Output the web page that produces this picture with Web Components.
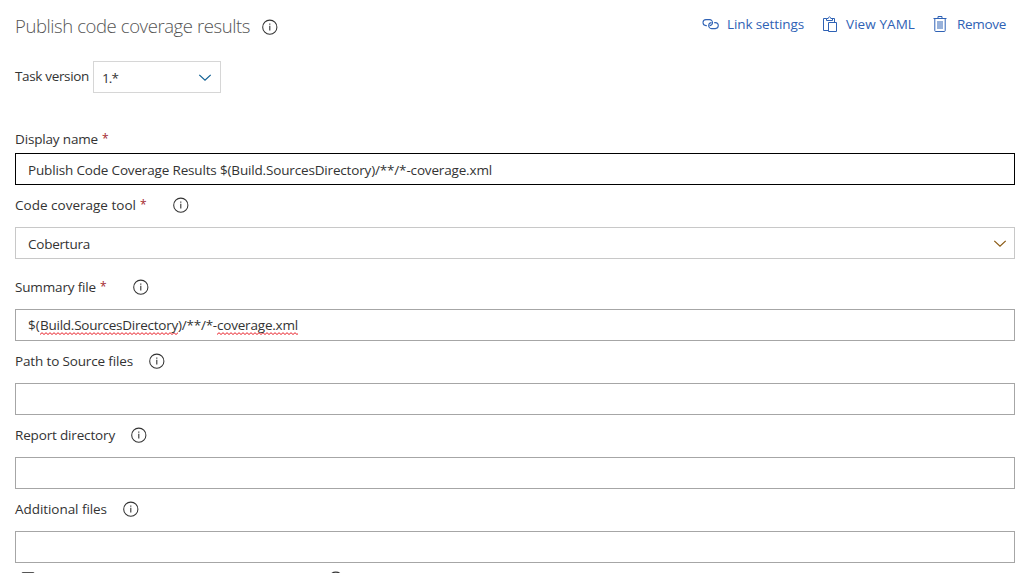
<!DOCTYPE html>
<html lang="en">
<head>
<meta charset="utf-8">
<title>Publish code coverage results</title>
<style>
html,body{margin:0;height:573px;overflow:hidden;background:#fff}
body{font:13.5px/20px "Open Sans","Noto Sans",sans-serif;color:#333}
</style>
</head>
<body>
<task-editor></task-editor>
<script>
const define = (name, html, setup) => {
  const t = document.createElement('template');
  t.innerHTML = html;
  customElements.define(name, class extends HTMLElement {
    connectedCallback() {
      if (this.shadowRoot) return;
      this.attachShadow({mode: 'open'}).append(t.content.cloneNode(true));
      if (setup) setup(this, this.shadowRoot);
    }
  });
};

// Text run tracked to a given width in pixels
define('fit-text', `<style>:host{display:inline-block;white-space:pre;flex:none}span{display:inline-block}</style><span><slot></slot></span>`, (el, root) => {
  const w = +el.getAttribute('w'), s = root.querySelector('span');
  const n = el.textContent.length;
  s.style.letterSpacing = (w - s.getBoundingClientRect().width) / n + 'px';
  el.style.width = w + 'px';
});

define('info-icon', `<style>:host{display:block;width:16px;height:16px;flex:none}svg{display:block}</style>
<svg width="16" height="16" viewBox="0 0 16 16"><circle cx="7.8" cy="8.2" r="7.1" fill="none" stroke="#333" stroke-width="1.05"/><path d="M7.8 6.7V11.4M7.8 4.5v1.2" stroke="#333" stroke-width="1.1"/></svg>`);

define('chevron-icon', `<style>:host{display:block;width:14px;height:8px;color:#0f5b8f}svg{display:block}</style>
<svg width="14" height="8" viewBox="0 0 14 8"><path d="M1.3 .9 7 6.2 12.7.9" fill="none" stroke="currentColor" stroke-width="1.25"/></svg>`);

define('action-link', `<style>:host{display:flex;align-items:center;color:#2f62b5;height:20px}
.i{display:block;height:18px;margin-right:var(--gap,8px)}::slotted(svg){display:block}</style>
<span class="i"><slot name="icon"></slot></span><slot></slot>`);

define('field-label', `<style>:host{display:flex;height:20px;align-items:center}
.s{color:#a4262c;width:6px;margin-left:4px;font-size:12px}.s[hidden]{display:none}info-icon{margin-left:16px}:host([required]) info-icon{margin-left:27px}:host([plain]) info-icon{display:none}</style>
<slot></slot><span class="s">*</span><info-icon></info-icon>`, (el, root) => {
  root.querySelector('.s').hidden = !el.hasAttribute('required');
});

define('text-box', `<style>:host{display:flex;box-sizing:border-box;height:32px;border:1px solid #a6a6a6;padding:1px 8px 0 12px;align-items:center;background:#fff}
:host([active]){border-color:#000}:host([select]){border-color:#c8c8c8}chevron-icon{margin-left:auto;margin-right:-1px;color:#8a5a14}:host(:not([select])) chevron-icon{display:none}
:host([small]){width:128px;border-color:#d6d6d6;padding-left:8px}:host([small]) chevron-icon{color:#106094;margin-right:0}</style>
<slot></slot><chevron-icon></chevron-icon>`);

define('spell-mark', `<style>:host{display:inline-block;height:20px;background:url("data:image/svg+xml,%3Csvg xmlns='http://www.w3.org/2000/svg' width='4' height='3'%3E%3Cpath d='M0 2.5 2 .7 4 2.5' fill='none' stroke='%23e8202a'/%3E%3C/svg%3E") 0 17px repeat-x}</style><slot></slot>`);

define('task-editor', `<style>
:host{display:block;box-sizing:border-box;width:1035px;height:573px;overflow:hidden;padding:12px 20px 0 15px}
header{display:flex;height:30px;align-items:flex-start}
h1{margin:-1px 0 0;font-size:18.5px;font-weight:300;line-height:30px;color:#555}
header info-icon{margin:7px 0 0 12px}
nav{display:flex;margin-left:auto;padding-right:9px;gap:18px;margin-top:2px}
.version{display:flex;margin-top:19px;gap:4px}.version>fit-text{margin-top:5px}
form{display:flex;flex-direction:column;margin-top:36px}
text-box{margin-top:12px}.first{margin-top:4px}field-label+text-box+field-label{margin-top:10px}
.g18{margin-top:18px!important}.value{display:flex;margin-top:-2px}
.option{display:flex;margin:9px 0 0 6px;height:16px}.check{box-sizing:border-box;width:14px;height:14px;border:1px solid #555;border-radius:2px}.option info-icon{margin:-1px 0 0 293px}
</style>
<header><h1><fit-text w="235">Publish code coverage results</fit-text></h1><info-icon></info-icon>
<nav>
<action-link><svg slot="icon" width="17" height="18" viewBox="0 0 17 18" fill="none" stroke="currentColor" stroke-width="1.05"><path d="M4.8 10.6H4A3 3 0 0 1 4 4.6h3.6a3 3 0 0 1 2.9 3.6c-.3 1.5-1.5 2.4-3 2.4"/><path d="M12.2 7.6h1.1a3 3 0 0 1 0 6H9.6a3 3 0 0 1-2.9-3.6c.3-1.4 1.4-2.4 2.9-2.4"/></svg><fit-text w="77">Link settings</fit-text></action-link>
<action-link><svg slot="icon" width="16" height="18" viewBox="0 0 16 18" fill="none" stroke="currentColor"><path d="M6.5 15.5h-5v-12h3M10 3.5h2.5v3.5M4.5 5.5v-2h1.7c.2-2.2 2.4-2.2 2.6 0h1.7v2zM6.5 7.5h8v9h-8z"/></svg><fit-text w="69">View YAML</fit-text></action-link>
<action-link style="--gap:9px"><svg slot="icon" width="15" height="18" viewBox="0 0 15 18" fill="none" stroke="currentColor"><path d="M.5 3.5h13M5 3V1.5h4V3M1.8 3.5v12.2q0 .8.8.8h8.8q.8 0 .8-.8V3.5"/><path d="M5 6v8M7 6v8M9 6v8"/></svg><fit-text w="49">Remove</fit-text></action-link>
</nav></header>
<div class="version"><fit-text w="74">Task version</fit-text><text-box select small style="margin:0"><fit-text w="16">1.*</fit-text></text-box></div>
<form>
<field-label required plain><fit-text w="83">Display name</fit-text></field-label>
<text-box active class="first"><fit-text w="464">Publish Code Coverage Results $(Build.SourcesDirectory)/**/*-coverage.xml</fit-text></text-box>
<field-label required><fit-text w="121">Code coverage tool</fit-text></field-label>
<text-box select><fit-text w="62">Cobertura</fit-text></text-box>
<field-label required class="g18"><fit-text w="81">Summary file</fit-text></field-label>
<text-box><span class="value"><fit-text w="12">$(</fit-text><spell-mark><fit-text w="138">Build.SourcesDirectory</fit-text></spell-mark><fit-text w="39">)/**/*-</fit-text><spell-mark><fit-text w="81">coverage.xml</fit-text></spell-mark></span></text-box>
<field-label><fit-text w="118">Path to Source files</fit-text></field-label>
<text-box></text-box>
<field-label><fit-text w="100">Report directory</fit-text></field-label>
<text-box></text-box>
<field-label><fit-text w="92">Additional files</fit-text></field-label>
<text-box></text-box>
</form>
<div class="option"><span class="check"></span><info-icon></info-icon></div>`);
</script>
</body>
</html>
